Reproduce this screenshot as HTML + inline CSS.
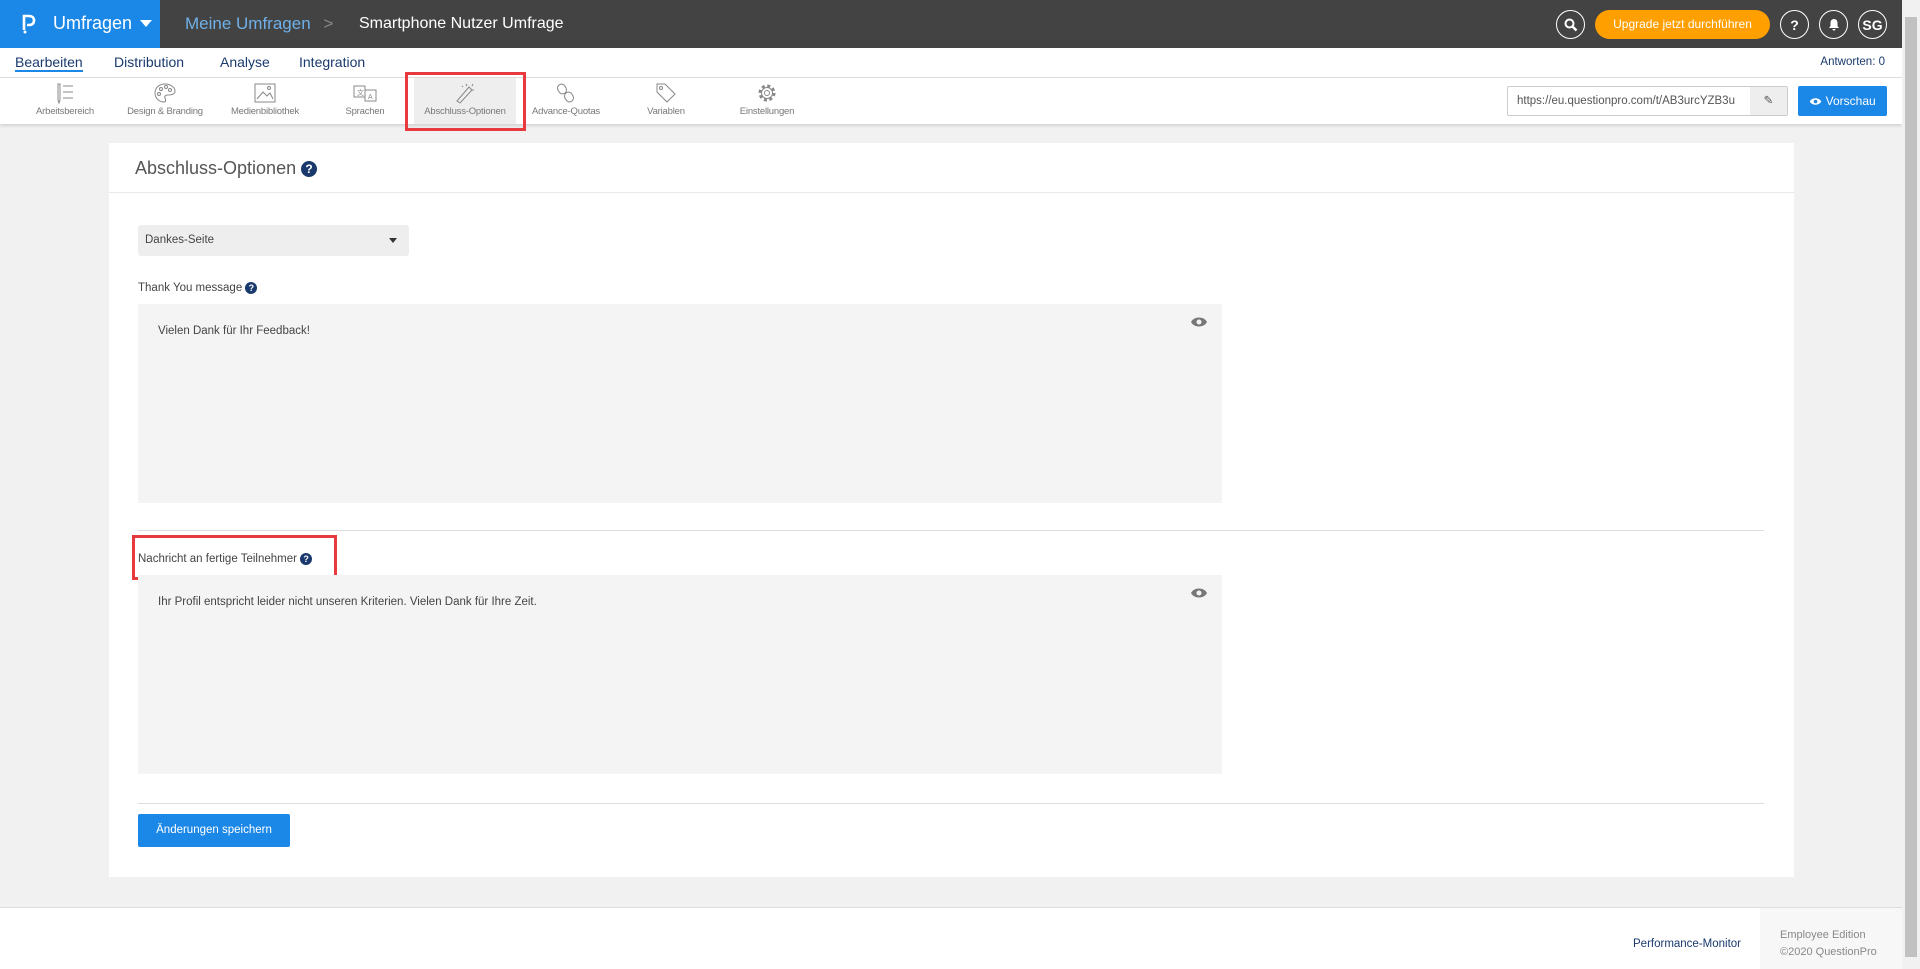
<!DOCTYPE html>
<html><head><meta charset="utf-8"><style>
*{box-sizing:border-box;margin:0;padding:0}
body{width:1920px;height:969px;overflow:hidden;background:#f1f1f1;font-family:"Liberation Sans",sans-serif;position:relative;color:#333}
.abs{position:absolute}
.top{left:0;top:0;width:1902px;height:48px;background:#434343}
.brand{left:0;top:0;width:160px;height:48px;background:#1b87e6;color:#fff;font-size:18px}
.circ{width:29px;height:29px;border:1.5px solid #fff;border-radius:50%;color:#fff;font-weight:bold;font-size:14px;display:flex;align-items:center;justify-content:center;top:10px}
.menu{left:0;top:48px;width:1902px;height:30px;background:#fff;border-bottom:1px solid #ddd}
.menu span{position:absolute;top:6px;font-size:14px;color:#1a3a6e}
.tool{left:0;top:78px;width:1902px;height:46px;background:#fff;box-shadow:0 2px 3px rgba(0,0,0,.12)}
.ti{position:absolute;top:0;width:100px;height:46px;text-align:center;font-size:9.5px;color:#777;white-space:nowrap;letter-spacing:-.2px}
.ti svg{display:block;margin:4px auto 2px}
.card{left:109px;top:143px;width:1685px;height:734px;background:#fff}
.ta{background:#f4f4f4;position:absolute;left:29px;width:1084px;height:199px;font-size:11.5px;color:#444;padding:21px 20px}
.q{display:inline-block;width:12px;height:12px;border-radius:50%;background:#1a3a6e;color:#fff;font-size:9px;font-weight:bold;text-align:center;line-height:12px;vertical-align:middle}
</style></head><body>
<div class="abs top"></div>
<div class="abs brand"><svg class="abs" style="left:22px;top:14px" width="14" height="20" viewBox="0 0 14 20"><path d="M2 16V2H7C10.5 2 12 4 12 6.5C12 9 10.5 11 7 11H5" fill="none" stroke="#fff" stroke-width="2.6"/><circle cx="3" cy="18" r="1.5" fill="#fff"/></svg><span class="abs" style="left:53px;top:13px">Umfragen</span><span class="abs" style="left:140px;top:20px;border-left:6px solid transparent;border-right:6px solid transparent;border-top:7px solid #fff"></span></div>
<div class="abs" style="left:185px;top:14px;font-size:17px;color:#6fb0e8">Meine Umfragen <span style="color:#888;margin-left:8px">&gt;</span></div>
<div class="abs" style="left:359px;top:15px;font-size:16px;color:#fff">Smartphone Nutzer Umfrage</div>
<div class="abs circ" style="left:1556px"><svg width="14" height="14" viewBox="0 0 14 14"><circle cx="5.5" cy="5.5" r="4" fill="none" stroke="#fff" stroke-width="2"/><path d="M8.5 8.5L12.5 12.5" stroke="#fff" stroke-width="2.5"/></svg></div>
<div class="abs" style="left:1595px;top:10px;width:175px;height:29px;border-radius:15px;background:#ff9f00;color:#fff;font-size:12px;text-align:center;line-height:29px">Upgrade jetzt durchführen</div>
<div class="abs circ" style="left:1780px">?</div>
<div class="abs circ" style="left:1819px"><svg width="12" height="13" viewBox="0 0 12 13"><path d="M6 1C3.5 1 2.5 3 2.5 5V8L1 10H11L9.5 8V5C9.5 3 8.5 1 6 1ZM4.5 11A1.5 1.5 0 0 0 7.5 11Z" fill="#fff"/></svg></div>
<div class="abs circ" style="left:1858px">SG</div>
<div class="abs menu">
<span style="left:15px;color:#1a3a6e;border-bottom:2px solid #1b87e6">Bearbeiten</span>
<span style="left:114px">Distribution</span><span style="left:220px">Analyse</span><span style="left:299px">Integration</span>
<span style="right:17px;top:8px;font-size:11.5px">Antworten: 0</span></div>
<div class="abs tool">
<div class="ti" style="left:15px"><svg width="28" height="22" viewBox="0 0 28 22"><path d="M7 2V18L8 21L9 18V2ZM12 4H22M12 10H22M12 16H22" stroke="#888" fill="none"/></svg>Arbeitsbereich</div>
<div class="ti" style="left:115px"><svg width="24" height="22" viewBox="0 0 24 22"><path d="M12 2C6 2 2 6 2 11C2 17 7 20 11 20C13 20 13 18 12 16C11 14 13 13 15 13C19 13 22 12 22 9C22 5 17 2 12 2Z" fill="none" stroke="#888"/><circle cx="8" cy="7" r="1.5" fill="none" stroke="#888"/><circle cx="13" cy="5" r="1.5" fill="none" stroke="#888"/><circle cx="17" cy="8" r="1.5" fill="none" stroke="#888"/><circle cx="6" cy="12" r="1.5" fill="none" stroke="#888"/></svg>Design &amp; Branding</div>
<div class="ti" style="left:215px"><svg width="24" height="22" viewBox="0 0 24 22"><rect x="2" y="2" width="20" height="18" fill="none" stroke="#888"/><path d="M4 17L10 10L14 14L17 11L20 17" fill="none" stroke="#888"/><circle cx="16" cy="6" r="1.5" fill="none" stroke="#888"/></svg>Medienbibliothek</div>
<div class="ti" style="left:315px"><svg width="26" height="22" viewBox="0 0 26 22"><rect x="2" y="4" width="11" height="11" fill="none" stroke="#888"/><rect x="13" y="8" width="11" height="11" fill="none" stroke="#888"/><text x="5" y="13" font-size="7" fill="#888">文</text><text x="16" y="17" font-size="7" fill="#888">A</text></svg>Sprachen</div>
<div class="ti" style="left:414px;width:102px;background:#eee"><svg width="24" height="22" viewBox="0 0 24 22"><path d="M4 19L16 5L19 8L7 21Z" fill="none" stroke="#888"/><path d="M13 2L14 4M20 2L19 4M21 8L19 8M9 4L10 5" stroke="#888"/></svg>Abschluss-Optionen</div>
<div class="ti" style="left:516px"><svg width="24" height="22" viewBox="0 0 24 22"><rect x="4" y="2" width="8" height="10" rx="4" fill="none" stroke="#888" transform="rotate(-30 8 7)"/><rect x="11" y="10" width="8" height="10" rx="4" fill="none" stroke="#888" transform="rotate(-30 15 15)"/></svg>Advance-Quotas</div>
<div class="ti" style="left:616px"><svg width="24" height="22" viewBox="0 0 24 22"><path d="M3 2H11L21 12L13 20L3 10Z" fill="none" stroke="#888"/><circle cx="7" cy="6" r="1.5" fill="none" stroke="#888"/></svg>Variablen</div>
<div class="ti" style="left:717px"><svg width="24" height="22" viewBox="0 0 24 22"><circle cx="12" cy="11" r="7" fill="none" stroke="#888" stroke-width="3" stroke-dasharray="3 2.5"/><circle cx="12" cy="11" r="5.5" fill="none" stroke="#888"/><circle cx="12" cy="11" r="2.5" fill="none" stroke="#888"/></svg>Einstellungen</div>
<div class="abs" style="left:1507px;top:8px;width:281px;height:30px;border:1px solid #ccc;border-radius:2px;font-size:11.5px;color:#555;padding:8px 9px;overflow:hidden;white-space:nowrap">https://eu.questionpro.com/t/AB3urcYZB3u<span class="abs" style="right:0;top:0;width:37px;height:28px;background:#eee;text-align:center;line-height:28px;color:#555">✎</span></div>
<div class="abs" style="left:1798px;top:8px;width:89px;height:30px;background:#1b87e6;border-radius:2px;color:#fff;font-size:12px;text-align:center;line-height:30px"><svg width="13" height="9" viewBox="0 0 18 12" style="vertical-align:-1px"><path d="M1 6C4 0 14 0 17 6C14 12 4 12 1 6Z" fill="#fff"/><circle cx="9" cy="6" r="2.5" fill="#1b87e6"/></svg> Vorschau</div>
</div>
<div class="abs" style="left:405px;top:72px;width:121px;height:59px;border:3px solid #e8393e"></div>
<div class="abs card">
<div class="abs" style="left:26px;top:15px;font-size:18px;color:#555">Abschluss-Optionen <span class="q" style="width:16px;height:16px;line-height:16px;font-size:12px">?</span></div>
<div class="abs" style="left:0;top:49px;width:1685px;height:1px;background:#e8e8ef"></div>
<div class="abs" style="left:29px;top:82px;width:271px;height:31px;background:#eee;border-radius:3px;font-size:11.5px;padding:9px 7px;color:#444">Dankes-Seite<span class="abs" style="right:12px;top:13px;border-left:4px solid transparent;border-right:4px solid transparent;border-top:5px solid #333"></span></div>
<div class="abs" style="left:29px;top:139px;font-size:11.5px;color:#444">Thank You message <span class="q">?</span></div>
<div class="ta" style="top:161px">Vielen Dank für Ihr Feedback!<svg class="abs" style="left:1052px;top:12px" width="18" height="12" viewBox="0 0 18 12"><path d="M1 6C4 0 14 0 17 6C14 12 4 12 1 6Z" fill="#777"/><circle cx="9" cy="6" r="2.5" fill="#f4f4f4"/></svg></div>
<div class="abs" style="left:29px;top:387px;width:1626px;height:1px;background:#ddd"></div>
<div class="abs" style="left:29px;top:410px;font-size:11.5px;color:#444">Nachricht an fertige Teilnehmer <span class="q">?</span></div>
<div class="abs" style="left:23px;top:392px;width:205px;height:45px;border:3px solid #e8393e"></div>
<div class="ta" style="top:432px">Ihr Profil entspricht leider nicht unseren Kriterien. Vielen Dank für Ihre Zeit.<svg class="abs" style="left:1052px;top:12px" width="18" height="12" viewBox="0 0 18 12"><path d="M1 6C4 0 14 0 17 6C14 12 4 12 1 6Z" fill="#777"/><circle cx="9" cy="6" r="2.5" fill="#f4f4f4"/></svg></div>
<div class="abs" style="left:29px;top:660px;width:1626px;height:1px;background:#ddd"></div>
<div class="abs" style="left:29px;top:671px;width:152px;height:33px;background:#1b87e6;border-radius:2px;color:#fff;font-size:11.5px;text-align:center;line-height:33px">Änderungen speichern</div>
</div>
<div class="abs" style="left:0;top:907px;width:1902px;height:62px;background:#fff;border-top:1px solid #ddd"></div>
<div class="abs" style="left:1633px;top:938px;font-size:11.5px;color:#1a3a6e">Performance-Monitor</div>
<div class="abs" style="left:1760px;top:908px;width:142px;height:61px;background:#f7f7f7;font-size:11px;color:#888;padding:19px 20px;line-height:17px;white-space:nowrap">Employee Edition<br>©2020 QuestionPro</div>
<div class="abs" style="left:1902px;top:0;width:18px;height:969px;background:#f1f1f1"><div class="abs" style="left:3px;top:17px;width:12px;height:940px;background:#c1c1c1"></div></div>
</body></html>
